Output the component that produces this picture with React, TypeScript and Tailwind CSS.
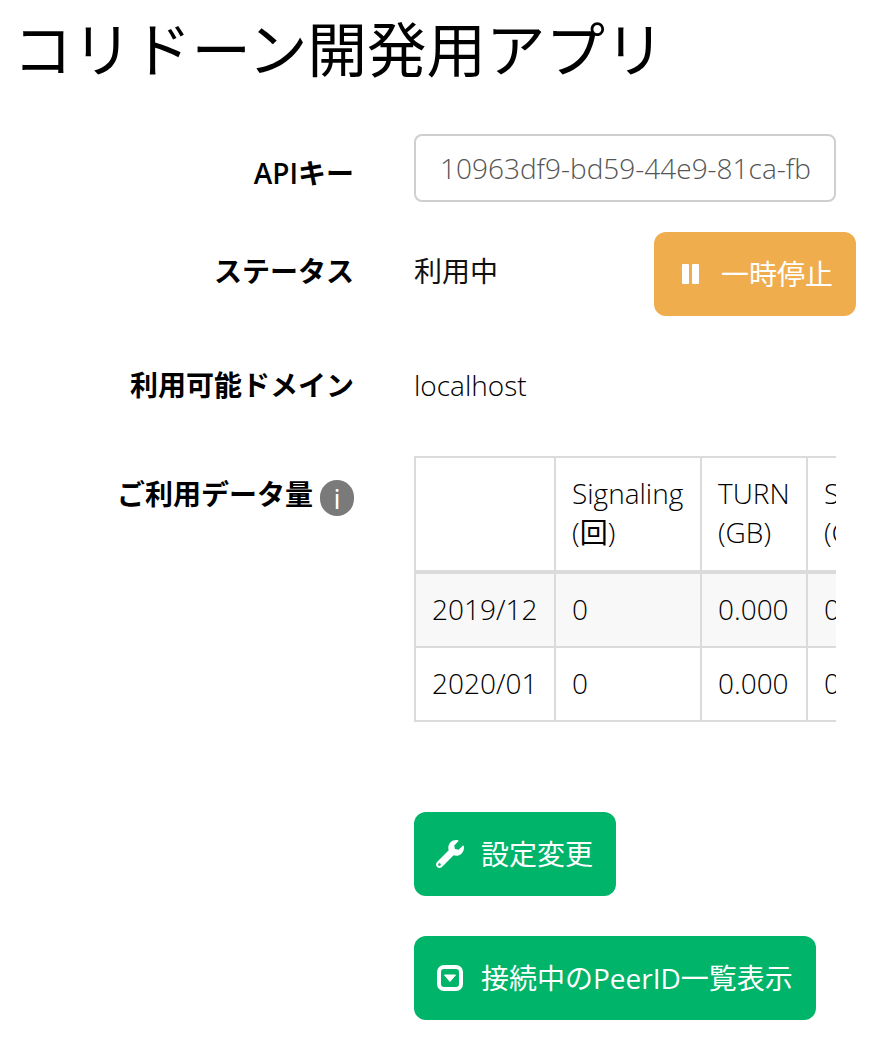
import { FaWrench } from "react-icons/fa";

const font = "font-['Open_Sans','Noto_Sans_CJK_JP',sans-serif]";
const label = "w-[334px] shrink-0 text-right font-bold text-[28px] leading-[39px] text-black";
const th = "border-2 border-[#dbdbdb] px-4 pt-[16px] pb-[18px] text-left align-top font-light text-black";
const td = "border-2 border-[#dbdbdb] px-4 pt-[16px] pb-[17px] align-top whitespace-nowrap font-light text-black";

function Btn({ icon, text, color, w }: { icon: React.ReactNode; text: string; color: string; w: string }) {
  return (
    <button className={`${color} ${w} h-[84px] shrink-0 rounded-[12px] text-white text-[28px] flex items-center pl-[21px]`}>
      <span className="w-[30px] flex justify-center text-[28px]">{icon}</span>
      <span className="ml-[16px]">{text}</span>
    </button>
  );
}

function PauseIcon() {
  return (
    <svg width="17" height="20" viewBox="0 0 17 20" fill="white">
      <rect x="0" y="0" width="7" height="20" rx="1" />
      <rect x="10" y="0" width="7" height="20" rx="1" />
    </svg>
  );
}

function CaretSquare() {
  return (
    <svg width="26" height="26" viewBox="0 0 26 26" fill="none">
      <rect x="2" y="2" width="22" height="22" rx="5" stroke="white" strokeWidth="4" />
      <path d="M7.5 10 H18.5 L13 16.5 Z" fill="white" stroke="white" strokeWidth="1" strokeLinejoin="round" />
    </svg>
  );
}

export default function App() {
  return (
    <div className={`${font} bg-white w-[876px] h-[1042px] overflow-hidden pl-5 text-[#111] text-[28px] leading-[39px]`}>
      <h1 className="text-[59.5px] leading-[60px] text-black pt-[19px] h-[134px] -ml-[7px]">コリドーン開発用アプリ</h1>

      <div className="flex gap-[60px] h-[98px]">
        <div className={`${label} pt-[20px]`}><span className="font-semibold">API</span>キー</div>
        <div className="w-[422px] h-[68px] rounded-[8px] border-2 border-[#cfcfcf] pl-6 flex items-center text-[#555] whitespace-nowrap overflow-hidden font-light">
          10963df9-bd59-44e9-81ca-fb
        </div>
      </div>

      <div className="flex gap-[60px] h-[114px]">
        <div className={`${label} pt-[20px]`}>ステータス</div>
        <div className="w-[442px] flex justify-between items-start">
          <span className="pt-[20px]">利用中</span>
          <Btn icon={<PauseIcon />} text="一時停止" color="bg-[#f0ad4e]" w="w-[202px]" />
        </div>
      </div>

      <div className="flex gap-[60px] h-[110px]">
        <div className={`${label} pt-[20px]`}>利用可能ドメイン</div>
        <div className="pt-[20px] font-light text-black">localhost</div>
      </div>

      <div className="flex gap-[60px] h-[356px]">
        <div className={`${label} pt-[19px] flex justify-end items-start h-[80px] gap-[7px]`}>
          <span>ご利用データ量</span>
          <span className="mt-[5px] w-[34px] h-[36px] rounded-full bg-[#7a7a7a] text-white font-normal text-[28px] leading-[36px] text-center">i</span>
        </div>
        <div className="w-[422px] overflow-hidden">
          <table className="w-[560px] border-collapse table-fixed border-2 border-[#dbdbdb]">
            <colgroup>
              <col className="w-[140px]" />
              <col className="w-[146px]" />
              <col className="w-[106px]" />
              <col className="w-[168px]" />
            </colgroup>
            <thead>
              <tr className="border-b-[4px] border-[#dbdbdb]">
                <th className={th}></th>
                <th className={th}>Signaling<br />(<span className="font-normal">回</span>)</th>
                <th className={th}>TURN<br />(GB)</th>
                <th className={th}>SFU<br />(GB)</th>
              </tr>
            </thead>
            <tbody>
              <tr className="bg-[#f8f8f8]">
                <td className={td}>2019/12</td>
                <td className={td}>0</td>
                <td className={td}>0.000</td>
                <td className={td}>0.000</td>
              </tr>
              <tr>
                <td className={td}>2020/01</td>
                <td className={td}>0</td>
                <td className={td}>0.000</td>
                <td className={td}>0.000</td>
              </tr>
            </tbody>
          </table>
        </div>
      </div>

      <div className="ml-[394px] flex flex-col gap-[40px]">
        <Btn icon={<FaWrench />} text="設定変更" color="bg-[#00b469]" w="w-[202px]" />
        <Btn icon={<CaretSquare />} text="接続中のPeerID一覧表示" color="bg-[#00b469]" w="w-[402px]" />
      </div>
    </div>
  );
}
